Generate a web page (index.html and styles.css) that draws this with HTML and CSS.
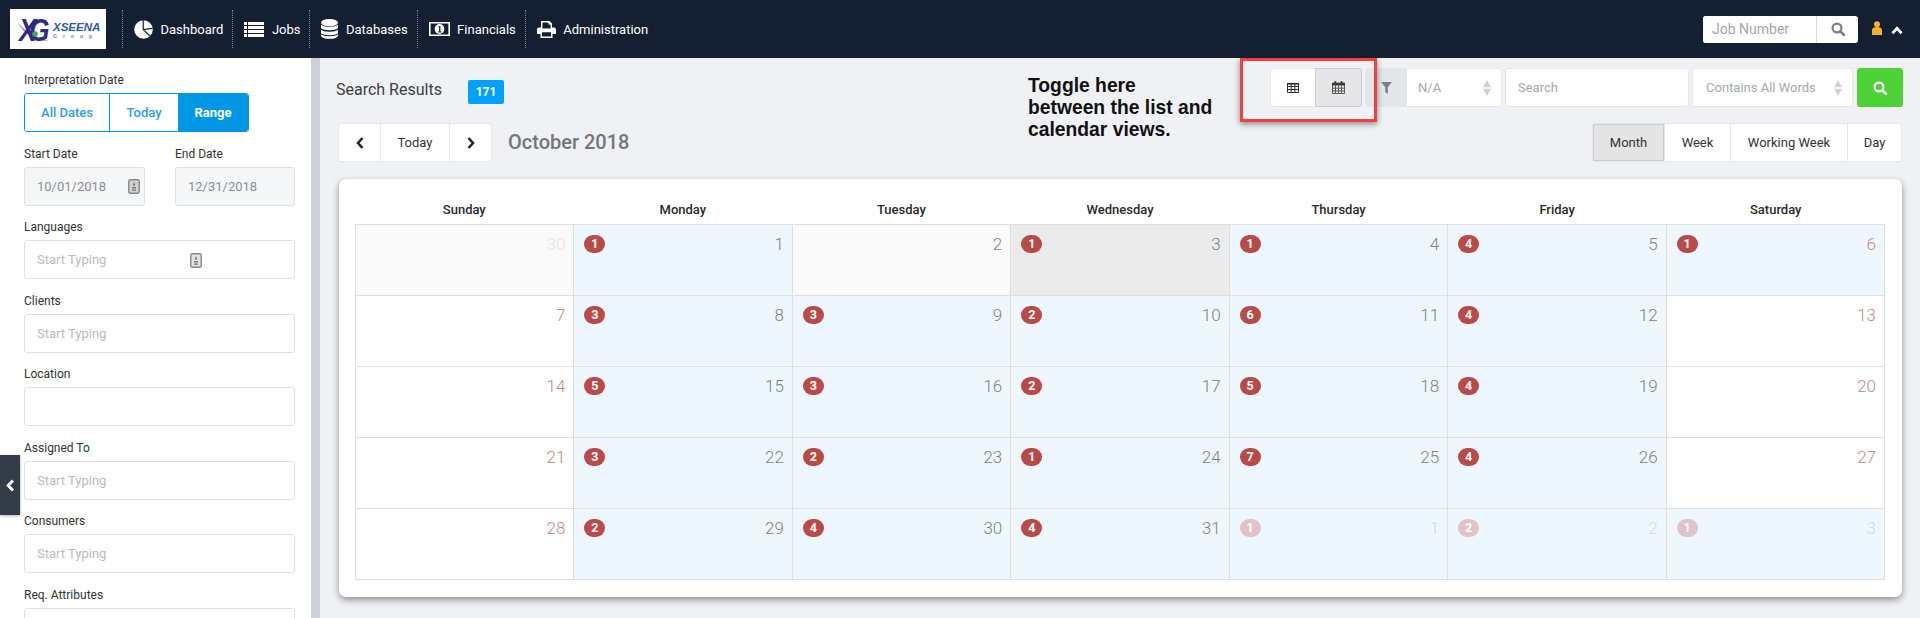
FILE: index.html
```html
<!DOCTYPE html>
<html lang="en">
<head>
<meta charset="utf-8">
<title>Xseena - Jobs Calendar</title>
<link rel="stylesheet" href="styles.css">
</head>
<body>
<header class="topbar">
  <div class="logo">
    <div class="logo-mark">
      <svg class="logo-swoosh" viewBox="0 0 35 28" width="35" height="28"><path d="M0 8C6 19 17 26 31 26C20 24 9 18 0 8Z" fill="#7f93cc"/></svg>
      <span class="logo-xg">XG</span>
      <svg class="logo-dot" viewBox="0 0 6 6" width="6" height="6"><circle cx="3" cy="3" r="2.8" fill="#3fa653"/></svg>
    </div>
    <div class="logo-words"><span class="logo-name">XSEENA</span><span class="logo-group">Group</span></div>
  </div>
  <nav class="mainnav">
    <a class="navitem"><svg class="ic" width="19" height="19" viewBox="0 0 19 19"><circle cx="9.5" cy="9.5" r="9.3" fill="#fff"/><path d="M9.2 0V9.6L18.6 8.4M9.2 9.6L16 16" fill="none" stroke="#142032" stroke-width="1.2"/><path d="M11 1.4L11 7.4L16.4 6.7C15.6 4 13.6 2 11 1.4Z" fill="#fff"/></svg>Dashboard</a>
    <a class="navitem"><svg class="ic" width="20" height="15" viewBox="0 0 20 15"><path d="M0 0H3V3H0ZM4 0H20V3H4ZM0 4H3V7H0ZM4 4H20V7H4ZM0 8H3V11H0ZM4 8H20V11H4ZM0 12H3V15H0ZM4 12H20V15H4Z" fill="#fff"/></svg>Jobs</a>
    <a class="navitem"><svg class="ic" width="17" height="20" viewBox="0 0 17 20"><ellipse cx="8.5" cy="3.6" rx="8.5" ry="3.6" fill="#fff"/><path d="M0 5.6C2 8.6 15 8.6 17 5.6V9C15 12 2 12 0 9ZM0 10.6C2 13.6 15 13.6 17 10.6V14C15 17 2 17 0 14ZM0 15C2 18 15 18 17 15V16.4C17 21 0 21 0 16.4Z" fill="#fff"/></svg>Databases</a>
    <a class="navitem"><svg class="ic" width="21" height="14" viewBox="0 0 21 14"><path fill-rule="evenodd" d="M0 0H21V14H0ZM1.6 1.6V12.4H19.4V1.6Z" fill="#fff"/><ellipse cx="10.5" cy="7" rx="4.8" ry="5" fill="#fff"/><path d="M9.6 4.6L11.4 3.8V9.4H12.4V10.4H9.2V9.4H10.1V5.4L9.6 5.6Z" fill="#142032"/></svg>Financials</a>
    <a class="navitem"><svg class="ic" width="19" height="17" viewBox="0 0 19 17"><path fill-rule="evenodd" d="M4 0H12.5L15 2.5V6.5H17C18.2 6.5 19 7.3 19 8.5V13H15.5V17H3.5V13H0V8.5C0 7.3.8 6.5 2 6.5H4ZM5.4 1.4V7.6H13.6V3.6H11.4V1.4ZM5 11.2V15.6H14V11.2Z" fill="#fff"/></svg>Administration</a>
  </nav>
  <div class="topright">
    <div class="jobsearch">
      <input class="jobinput" type="text" placeholder="Job Number">
      <span class="jobbtn"><svg width="14" height="14" viewBox="0 0 14 14"><circle cx="6" cy="6" r="4.4" fill="none" stroke="#777f8a" stroke-width="2.2"/><path d="M9.2 9.2L13 13" stroke="#777f8a" stroke-width="2.6" stroke-linecap="round"/></svg></span>
    </div>
    <svg class="usericon" width="10" height="14" viewBox="0 0 10 14"><circle cx="5" cy="3.2" r="3" fill="#f4b32b"/><path d="M0 14V9C0 7 2 6 5 6S10 7 10 9V14Z" fill="#f4b32b"/></svg>
    <svg class="upicon" width="12" height="9" viewBox="0 0 12 9"><path d="M1.5 7.2L6 2.4L10.5 7.2" fill="none" stroke="#fff" stroke-width="2.8"/></svg>
  </div>
</header>

<div class="app">
  <aside class="sidebar">
    <div class="field field-first">
      <label class="flabel">Interpretation Date</label>
      <div class="rangegroup">
        <span class="rangebtn rb-all">All Dates</span>
        <span class="rangebtn rb-today">Today</span>
        <span class="rangebtn rb-range">Range</span>
      </div>
    </div>
    <div class="daterow">
      <div class="datecol">
        <label class="flabel">Start Date</label>
        <div class="inputwrap disabled"><input class="finput" type="text" value="10/01/2018" disabled>
          <svg class="addon addon-date" width="12" height="15" viewBox="0 0 12 15"><rect x=".8" y=".8" width="10.4" height="13.4" rx="1.4" fill="#d2d2d2" stroke="#888" stroke-width="1.4"/><path d="M6 3L7.4 6.4H4.6ZM4 8H8V9.4H4ZM4 10.4H8V11.8H4Z" fill="#777"/></svg>
        </div>
      </div>
      <div class="datecol">
        <label class="flabel">End Date</label>
        <div class="inputwrap disabled"><input class="finput" type="text" value="12/31/2018" disabled></div>
      </div>
    </div>
    <div class="field">
      <label class="flabel">Languages</label>
      <div class="inputwrap"><input class="finput" type="text" placeholder="Start Typing">
        <svg class="addon addon-lang" width="12" height="15" viewBox="0 0 12 15"><rect x=".8" y=".8" width="10.4" height="13.4" rx="1.4" fill="#e2e2e2" stroke="#888" stroke-width="1.4"/><path d="M6 3L7.4 6.4H4.6ZM4 8H8V9.4H4ZM4 10.4H8V11.8H4Z" fill="#777"/></svg>
      </div>
    </div>
    <div class="field"><label class="flabel">Clients</label><div class="inputwrap"><input class="finput" type="text" placeholder="Start Typing"></div></div>
    <div class="field"><label class="flabel">Location</label><div class="inputwrap"><input class="finput" type="text"></div></div>
    <div class="field"><label class="flabel">Assigned To</label><div class="inputwrap"><input class="finput" type="text" placeholder="Start Typing"></div></div>
    <div class="field"><label class="flabel">Consumers</label><div class="inputwrap"><input class="finput" type="text" placeholder="Start Typing"></div></div>
    <div class="field"><label class="flabel">Req. Attributes</label><div class="inputwrap"><input class="finput" type="text"></div></div>
    <div class="collapse"><svg width="9" height="13" viewBox="0 0 9 13"><path d="M7 1.5L2.2 6.5L7 11.5" fill="none" stroke="#fff" stroke-width="3"/></svg></div>
  </aside>

  <main class="main">
    <div class="toolbar">
      <span class="restitle">Search Results</span>
      <span class="rescount">171</span>
      <div class="tools">
        <div class="viewtoggle">
          <span class="vt-btn"><svg width="12" height="10" viewBox="0 0 12 10"><path d="M.5.5H11.5V9.5H.5ZM.5 3.5H11.5M.5 6.5H11.5M4.2.5V9.5M7.8.5V9.5" fill="none" stroke="#2a2a33" stroke-width="1"/><path d="M0 0H12V1.6H0Z" fill="#2a2a33"/></svg></span>
          <span class="vt-btn vt-active"><svg width="13" height="13" viewBox="0 0 13 13"><path d="M.5 2H12.5V12.5H.5ZM.5 7.2H12.5M.5 9.9H12.5M3.5 4.6V12.5M6.5 4.6V12.5M9.5 4.6V12.5" fill="none" stroke="#5a5a5a" stroke-width="1"/><path d="M0 2H13V4.6H0ZM2.6 0H4.2V2.4H2.6ZM8.8 0H10.4V2.4H8.8Z" fill="#3a3a3a"/></svg></span>
        </div>
        <div class="filterbox">
          <span class="filtericon"><svg width="11" height="12" viewBox="0 0 11 12"><path d="M0 0H11L6.8 5.2V12L4.2 10V5.2Z" fill="#7d8085"/></svg></span>
          <span class="selecttext">N/A</span>
          <svg class="updown" width="8" height="16" viewBox="0 0 8 16"><path d="M4 0L8 7.2H0ZM4 16L0 8.8H8Z" fill="#cfd1d4"/></svg>
        </div>
        <input class="searchinput" type="text" placeholder="Search">
        <div class="matchbox">
          <span class="selecttext">Contains All Words</span>
          <svg class="updown" width="8" height="16" viewBox="0 0 8 16"><path d="M4 0L8 7.2H0ZM4 16L0 8.8H8Z" fill="#cfd1d4"/></svg>
        </div>
        <span class="gobtn"><svg width="14" height="14" viewBox="0 0 14 14"><circle cx="6" cy="6" r="4.4" fill="none" stroke="#fff" stroke-width="2.2"/><path d="M9.2 9.2L13 13" stroke="#fff" stroke-width="2.6" stroke-linecap="round"/></svg></span>
      </div>
    </div>

    <div class="calbar">
      <div class="btngroup">
        <span class="cbtn cb-arrow"><svg width="8" height="12" viewBox="0 0 8 12"><path d="M6.5 1L2 6L6.5 11" fill="none" stroke="#1f2733" stroke-width="2.6"/></svg></span>
        <span class="cbtn cb-today">Today</span>
        <span class="cbtn cb-next"><svg width="8" height="12" viewBox="0 0 8 12"><path d="M1.5 1L6 6L1.5 11" fill="none" stroke="#1f2733" stroke-width="2.6"/></svg></span>
      </div>
      <h2 class="caltitle">October 2018</h2>
      <div class="btngroup viewgroup">
        <span class="cbtn cb-month">Month</span>
        <span class="cbtn cb-week">Week</span>
        <span class="cbtn cb-work">Working Week</span>
        <span class="cbtn cb-day">Day</span>
      </div>
    </div>

    <section class="card">
      <div class="dow"><span>Sunday</span><span>Monday</span><span>Tuesday</span><span>Wednesday</span><span>Thursday</span><span>Friday</span><span>Saturday</span></div>
      <div class="grid">
        <div class="cell past"><i></i><b class="num wk fade">30</b></div>
        <div class="cell job"><span class="pill">1</span><b class="num">1</b></div>
        <div class="cell past"><i></i><b class="num">2</b></div>
        <div class="cell today"><span class="pill">1</span><b class="num">3</b></div>
        <div class="cell job"><span class="pill">1</span><b class="num">4</b></div>
        <div class="cell job"><span class="pill">4</span><b class="num">5</b></div>
        <div class="cell job"><span class="pill">1</span><b class="num wk">6</b></div>

        <div class="cell"><i></i><b class="num wk">7</b></div>
        <div class="cell job"><span class="pill">3</span><b class="num">8</b></div>
        <div class="cell job"><span class="pill">3</span><b class="num">9</b></div>
        <div class="cell job"><span class="pill">2</span><b class="num">10</b></div>
        <div class="cell job"><span class="pill">6</span><b class="num">11</b></div>
        <div class="cell job"><span class="pill">4</span><b class="num">12</b></div>
        <div class="cell"><i></i><b class="num wk">13</b></div>

        <div class="cell"><i></i><b class="num wk">14</b></div>
        <div class="cell job"><span class="pill">5</span><b class="num">15</b></div>
        <div class="cell job"><span class="pill">3</span><b class="num">16</b></div>
        <div class="cell job"><span class="pill">2</span><b class="num">17</b></div>
        <div class="cell job"><span class="pill">5</span><b class="num">18</b></div>
        <div class="cell job"><span class="pill">4</span><b class="num">19</b></div>
        <div class="cell"><i></i><b class="num wk">20</b></div>

        <div class="cell"><i></i><b class="num wk">21</b></div>
        <div class="cell job"><span class="pill">3</span><b class="num">22</b></div>
        <div class="cell job"><span class="pill">2</span><b class="num">23</b></div>
        <div class="cell job"><span class="pill">1</span><b class="num">24</b></div>
        <div class="cell job"><span class="pill">7</span><b class="num">25</b></div>
        <div class="cell job"><span class="pill">4</span><b class="num">26</b></div>
        <div class="cell"><i></i><b class="num wk">27</b></div>

        <div class="cell"><i></i><b class="num wk">28</b></div>
        <div class="cell job"><span class="pill">2</span><b class="num">29</b></div>
        <div class="cell job"><span class="pill">4</span><b class="num">30</b></div>
        <div class="cell job"><span class="pill">4</span><b class="num">31</b></div>
        <div class="cell job"><span class="pill fade-pill">1</span><b class="num fade">1</b></div>
        <div class="cell job"><span class="pill fade-pill">2</span><b class="num fade">2</b></div>
        <div class="cell job"><span class="pill fade-pill">1</span><b class="num fade">3</b></div>
      </div>
    </section>

    <p class="note">Toggle here<br>between the list and<br>calendar views.</p>
    <div class="redbox"></div>
  </main>
</div>
</body>
</html>
```
FILE: styles.css
```css
* { box-sizing: border-box; }
html, body { margin: 0; height: 618px; overflow: hidden; }
body { font-family: Roboto, "Liberation Sans", sans-serif; font-size: 13px; color: #333; background: #eff1f5; }

/* top bar */
.topbar { height: 58px; background: #142032; display: flex; align-items: center; padding-left: 10px; }
.logo { width: 96px; height: 40px; background: #fff; display: flex; align-items: center; padding-left: 8px; overflow: hidden; flex: none; }
.logo-mark { position: relative; width: 35px; height: 28px; flex: none; font-family: "Liberation Sans", sans-serif; font-weight: 700; font-style: italic; color: #2e2a86; }
.logo-swoosh { position: absolute; left: 0; top: 0; }
.logo-xg { position: absolute; left: 1px; top: 1px; font-size: 26px; line-height: 24px; letter-spacing: -7px; transform: scaleY(1.2); transform-origin: top left; }
.logo-dot { position: absolute; left: 14px; top: 16px; }
.logo-words { display: flex; flex-direction: column; margin-top: 2px; font-family: "Liberation Sans", sans-serif; color: #2b5aa8; }
.logo-name { font-size: 11.5px; font-weight: 700; font-style: italic; line-height: 12px; }
.logo-group { font-size: 5px; line-height: 6px; letter-spacing: 6px; font-weight: 700; color: #5f7fb8; }

.mainnav { display: flex; margin-left: 16px; }
.navitem { display: flex; align-items: center; gap: 7.5px; height: 38px; padding: 0 9px 0 11px; border-left: 1px dotted #7b8492; color: #fff; font-size: 13px; white-space: nowrap; }
.navitem .ic { flex: none; }

.topright { margin-left: auto; display: flex; align-items: center; padding-right: 17px; }
.jobsearch { display: flex; width: 155px; height: 27px; background: #fff; border-radius: 3px; overflow: hidden; }
.jobinput { width: 114px; border: 0; outline: 0; padding: 0 0 0 9px; font: 14px Roboto, sans-serif; border-right: 1px solid #d5d9df; }
.jobinput::placeholder { color: #a3a7ad; opacity: 1; }
.jobbtn { flex: 1; display: flex; align-items: center; justify-content: center; }
.usericon { margin-left: 14px; margin-top: -3px; }
.upicon { margin-left: 9px; margin-top: 3px; }

/* layout */
.app { display: flex; height: 560px; }
.sidebar { position: relative; width: 320px; flex: none; background: #fff; border-right: 9px solid #cdd1d6; padding: 15px 16px 0 24px; overflow: visible; }

.flabel { display: block; font-size: 12px; line-height: 14px; color: #333; margin-bottom: 6px; }
.field { height: 73.5px; }
.field-first { height: 74px; }
.rangegroup { display: flex; width: 225px; height: 39px; border: 1px solid #0097e6; border-radius: 3px; overflow: hidden; font-size: 13px; font-weight: 500; }
.rangebtn { display: flex; align-items: center; justify-content: center; color: #2c9cf0; background: #fff; }
.rb-all { width: 85px; border-right: 1px solid #0097e6; }
.rb-today { width: 68px; }
.rb-range { flex: 1; background: #0097e6; color: #fff; font-weight: 700; }

.daterow { display: flex; gap: 30px; height: 73px; margin-top: 0; }
.datecol { width: 121px; }
.datecol + .datecol { width: 120px; }
.inputwrap { position: relative; height: 39px; border: 1px solid #dde1e6; border-radius: 3px; background: #fff; }
.inputwrap.disabled { background: #f5f6f8; }
.finput { width: 100%; height: 100%; border: 0; outline: 0; padding: 0 12px; background: transparent; font: 13px Roboto, sans-serif; color: #8b8f95; }
.finput:disabled { color: #8b8f95; -webkit-text-fill-color: #8b8f95; opacity: 1; }
.finput::placeholder { color: #b9bcc1; opacity: 1; }
.addon { position: absolute; }
.addon-date { right: 4px; top: 11px; }
.addon-lang { left: 165px; top: 12px; }
.collapse { position: absolute; left: 0; top: 397px; width: 20px; height: 60px; background: #333b47; display: flex; align-items: center; justify-content: center; box-shadow: 0 1px 3px rgba(0,0,0,.3); }

/* main column */
.main { position: relative; flex: 1; min-width: 0; padding: 10px 17px 0 18px; }
.toolbar { display: flex; align-items: flex-start; height: 39px; }
.restitle { font-size: 16px; line-height: 24px; margin: 10px 0 0 -2px; color: #3c3f44; width: 132px; }
.rescount { width: 36px; height: 24px; margin-top: 12px; background: #00a2ff; border-radius: 2px; color: #fff; font-size: 12px; font-weight: 700; display: flex; align-items: center; justify-content: center; }
.tools { margin-left: auto; display: flex; height: 39px; }
.viewtoggle { display: flex; width: 92px; height: 39px; background: #fff; border: 1px solid #e4e7ec; border-radius: 3px; margin-right: 3px; }
.vt-btn { width: 44px; flex: none; display: flex; align-items: center; justify-content: center; }
.vt-active { flex: 1; background: #e6e6e6; border: 1px solid #c6ccd4; border-radius: 0 3px 3px 0; margin: -1px -1px -1px 0; height: 39px; }
.filterbox { display: flex; align-items: center; width: 137px; height: 39px; background: #fff; border: 1px solid #e4e7ec; border-radius: 3px; margin-right: 3px; font-size: 13px; }
.filtericon { width: 41px; height: 100%; background: #e5e6e9; display: flex; align-items: center; justify-content: center; margin-right: 11px; flex: none; }
.selecttext { color: #a5a8ad; white-space: nowrap; }
.filterbox .updown { margin-left: auto; margin-right: 10px; }
.searchinput { width: 184px; height: 39px; border: 1px solid #e4e7ec; border-radius: 3px; background: #fff; outline: 0; padding: 0 12px; margin-right: 3px; font: 13px Roboto, sans-serif; }
.searchinput::placeholder { color: #a5a8ad; opacity: 1; }
.matchbox { display: flex; align-items: center; width: 161px; height: 39px; padding-left: 13px; background: #fff; border: 1px solid #e4e7ec; border-radius: 3px; margin-right: 4px; font-size: 13px; }
.matchbox .updown { margin-left: auto; margin-right: 10px; }
.gobtn { width: 46px; height: 39px; background: #4cd137; border-radius: 3px; display: flex; align-items: center; justify-content: center; }

.calbar { display: flex; align-items: center; height: 39px; margin-top: 16px; }
.btngroup { display: flex; height: 39px; background: #fff; border: 1px solid #e4e7ec; border-radius: 3px; }
.cbtn { display: flex; align-items: center; justify-content: center; font-size: 13px; color: #333; border-left: 1px solid #e4e7ec; }
.cbtn:first-child { border-left: 0; }
.cb-arrow { width: 41px; }
.cb-next { width: 42px; }
.cb-today { width: 69px; }
.caltitle { margin: 0 0 2px 16px; font-size: 20px; font-weight: 500; color: #73767a; }
.viewgroup { margin-left: auto; margin-right: 1px; width: 310px; }
.cb-month { width: 71px; background: #e4e4e4; box-shadow: inset 0 0 0 1px #c6ccd4; }
.cb-week { width: 66px; }
.cb-work { width: 117px; }
.cb-day { flex: 1; }

/* calendar card */
.card { width: 1563px; height: 418px; margin: 17px 0 0 1px; padding: 0 17px 0 16px; background: #fff; border-radius: 7px; box-shadow: 0 3px 7px rgba(0,0,0,.4); }
.dow { display: grid; grid-template-columns: repeat(7, 1fr); height: 45px; padding-top: 23px; font-size: 13px; font-weight: 500; line-height: 16px; color: #2a2a2a; text-align: center; }
.grid { display: grid; grid-template-columns: repeat(7, 1fr); grid-auto-rows: 71px; border-top: 1px solid #e0e0e0; border-left: 1px solid #e0e0e0; }
.cell { display: flex; justify-content: space-between; align-items: flex-start; padding: 10px 8px 0 10px; border-right: 1px solid #dde0e3; border-bottom: 1px solid #e0e0e0; background: #fff; }
.cell.job { background: #eef7fe; }
.cell.past { background: #fafafa; }
.cell.today { background: #ebebeb; }
.pill { width: 21px; height: 18px; border-radius: 9px; background: #b94a48; color: #fff; font-size: 12.5px; font-weight: 700; line-height: 18px; text-align: center; }
.pill.fade-pill { background: #dfc3c8; }
.num { font-size: 17px; font-weight: 300; line-height: 19px; color: #7a838c; }
.num.wk { color: #c08a8a; }
.num.fade { opacity: .25; }
.num.wk.fade { color: #c08a8a; opacity: .25; }

/* annotation on the screenshot */
.note { position: absolute; left: 708px; top: 17px; margin: 0; font-family: "Liberation Sans", Arial, sans-serif; font-size: 19.3px; font-weight: 700; line-height: 22px; color: #111; }
.redbox { position: absolute; left: 920px; top: 0; width: 137px; height: 64px; border: 3px solid #f24040; box-shadow: 0 2px 6px rgba(0,0,0,.45); }
```
